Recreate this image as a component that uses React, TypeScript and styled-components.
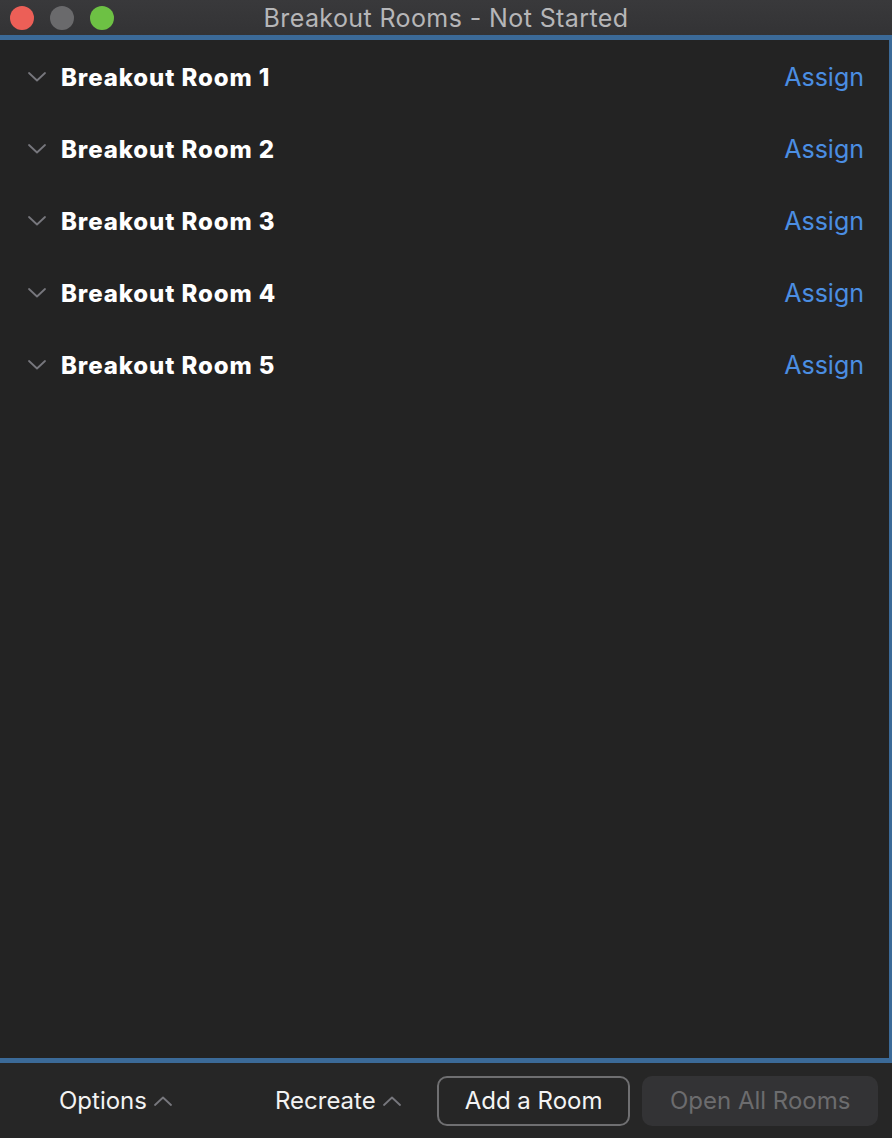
import React from 'react';
import styled, { createGlobalStyle } from 'styled-components';

const GlobalStyle = createGlobalStyle`
  html, body {
    margin: 0;
    padding: 0;
    background: #232323;
  }
  * {
    box-sizing: border-box;
  }
`;

const rooms = [1, 2, 3, 4, 5];

const Chevron = ({ up }: { up?: boolean }) => (
  <svg width="18" height="10" viewBox="0 0 18 10" fill="none">
    <path
      d={up ? 'M1 9L9 1.5L17 9' : 'M1 1L9 8.5L17 1'}
      stroke="#77777d"
      strokeWidth="1.8"
      strokeLinecap="round"
      strokeLinejoin="round"
    />
  </svg>
);

const App = () => {
  return (
    <Window>
      <GlobalStyle />
      <TitleBar>
        <Lights>
          <Light color="#ec5f57" />
          <Light color="#6a6a6c" />
          <Light color="#6dc144" />
        </Lights>
        <Title>Breakout Rooms - Not Started</Title>
      </TitleBar>
      <Panel>
        {rooms.map((n) => (
          <RoomRow key={n}>
            <RoomName>
              <Chevron />
              <span>Breakout Room {n}</span>
            </RoomName>
            <AssignLink>Assign</AssignLink>
          </RoomRow>
        ))}
      </Panel>
      <Footer>
        <MenuButton>
          Options
          <Chevron up />
        </MenuButton>
        <MenuButton>
          Recreate
          <Chevron up />
        </MenuButton>
        <OutlineButton>Add a Room</OutlineButton>
        <DisabledButton>Open All Rooms</DisabledButton>
      </Footer>
    </Window>
  );
};

export default App;

const Window = styled.div`
  display: flex;
  flex-direction: column;
  width: 892px;
  height: 1138px;
  background: #262626;
  font-family: Inter, 'Liberation Sans', sans-serif;
  overflow: hidden;
`;

const TitleBar = styled.div`
  position: relative;
  display: flex;
  align-items: center;
  justify-content: center;
  height: 35px;
  flex-shrink: 0;
  background: linear-gradient(#39393b, #333335);
`;

const Lights = styled.div`
  position: absolute;
  left: 10px;
  top: 6px;
  display: flex;
  gap: 16px;
`;

const Light = styled.div<{ color: string }>`
  width: 24px;
  height: 24px;
  border-radius: 50%;
  background: ${({ color }) => color};
`;

const Title = styled.div`
  font-size: 25px;
  color: #b6b6b8;
  letter-spacing: 0.4px;
`;

const Panel = styled.div`
  flex: 1;
  display: flex;
  flex-direction: column;
  gap: 36px;
  padding: 19px 25px 0 28px;
  background: #232323;
  border-top: 5px solid #3b6a98;
  border-bottom: 5px solid #3b6a98;
  border-right: 3px solid #3b6a98;
`;

const RoomRow = styled.div`
  display: flex;
  align-items: center;
  justify-content: space-between;
  height: 36px;
`;

const RoomName = styled.div`
  display: flex;
  align-items: center;
  gap: 15px;
  font-size: 24px;
  font-weight: 800;
  letter-spacing: 0.9px;
  color: #ffffff;
`;

const AssignLink = styled.div`
  font-size: 25px;
  color: #4b8ee2;
`;

const Footer = styled.div`
  display: flex;
  align-items: center;
  height: 75px;
  flex-shrink: 0;
  padding: 0 14px 0 59px;
  background: #262626;
`;

const MenuButton = styled.div`
  display: flex;
  align-items: center;
  gap: 7px;
  margin-right: 103px;
  font-size: 24px;
  color: #f2f2f2;

  &:nth-child(2) {
    margin-right: 36px;
  }
`;

const OutlineButton = styled.div`
  display: flex;
  align-items: center;
  justify-content: center;
  width: 194px;
  height: 50px;
  margin-right: 12px;
  border: 2px solid #6f6f71;
  border-radius: 10px;
  font-size: 24px;
  color: #f4f4f4;
`;

const DisabledButton = styled.div`
  display: flex;
  align-items: center;
  justify-content: center;
  width: 236px;
  height: 50px;
  border-radius: 10px;
  background: #333335;
  font-size: 24px;
  color: #6c6c6e;
`;
